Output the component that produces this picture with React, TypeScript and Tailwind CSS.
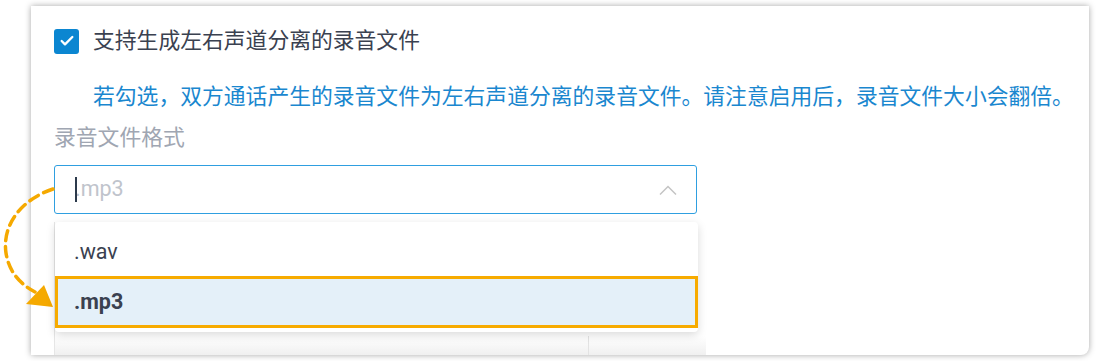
import { Check } from "lucide-react"

export default function App() {
  return (
    <div className="relative h-[361px] w-[1096px] overflow-hidden bg-white font-['Roboto','Noto_Sans_CJK_SC',sans-serif]">
      {/* Settings card */}
      <div className="relative ml-[31px] mt-[6px] h-[349px] w-[1058px] rounded-br-[8px] bg-white pl-[23px] pt-[23px] shadow-[0_0_6px_rgba(0,0,0,0.35)]">
        <div className="flex h-[24px] items-center gap-[14px]">
          <span className="flex h-[25px] w-[25px] items-center justify-center rounded-[3px] bg-[#0b86d1]">
            <Check className="h-[16px] w-[16px] text-white" strokeWidth={3.5} />
          </span>
          <span className="text-[21.8px] leading-[32px] text-[#3a4150]">支持生成左右声道分离的录音文件</span>
        </div>

        <p className="mt-[28px] pl-[39px] text-[21.8px] leading-[32px] text-[#1a87cf]">
          若勾选，双方通话产生的录音文件为左右声道分离的录音文件。请注意启用后，录音文件大小会翻倍。
        </p>

        <div className="mt-[9px] text-[21.8px] leading-[32px] text-[#a0a6b2]">录音文件格式</div>

        {/* Select */}
        <div className="relative mt-[11px] w-[643px]">
          <div className="relative flex h-[49px] items-center justify-between rounded-[3px] border border-[#2f9fe0] bg-white pl-[20px] pr-[19px]">
            <span className="text-[21.5px] text-[#c0c4cc]">.mp3</span>
            <span className="absolute left-[20px] top-[11px] h-[25px] w-[2px] bg-[#2c3a4c]" />
            <svg width="18" height="10" viewBox="0 0 18 10" fill="none" stroke="#c4c4c4" strokeWidth="1.5">
              <polyline points="1,9.5 9,1.5 17,9.5" />
            </svg>
          </div>

          {/* Table behind the menu */}
          <div className="mt-[8px] flex h-[133px] w-[652px] flex-col border-l border-[#e6e6e6]">
            <div className="flex-1" />
            <div className="relative flex h-[33px] items-start bg-white">
              <span className="ml-[20px] mt-[2px] h-[25px] w-[25px] rounded-[3px] border border-[#cfcfcf] bg-white" />
              <span className="ml-[460px] text-[16px] leading-[22px] text-[#3a4150]">2.15 s</span>
            </div>
            <div className="flex h-[19px] bg-gradient-to-b from-white to-[#f0f0f0]">
              <div className="w-[533px]" />
              <div className="border-l border-[#e3e3e3]" />
            </div>
          </div>

          {/* Dropdown menu */}
          <div className="absolute left-[1px] top-[57px] z-10 flex w-[643px] flex-col rounded-[4px] bg-white pb-[4px] pt-[7px] shadow-[0_3px_10px_rgba(0,0,0,0.15)]">
            <div className="flex h-[47px] items-center pl-[19px] text-[21.5px] text-[#3a4150]">.wav</div>
            <div className="flex h-[52px] items-center border-[3px] border-[#f7ab00] bg-[#e4f0f9] pl-[16px] text-[21.5px] font-bold text-[#3a4150]">
              .mp3
            </div>
          </div>
        </div>
      </div>

      {/* Dashed callout arrow */}
      <svg className="pointer-events-none absolute left-0 top-0" width="1096" height="361" fill="none">
        <path
          d="M53 189 C 20 200, 2 226, 6 253 C 9 272, 20 284, 35 292"
          stroke="#f5a900"
          strokeWidth="3.5"
          strokeDasharray="10 6"
          strokeLinecap="round"
        />
        <polygon points="44,285 53,307 26,304" fill="#f5a900" />
      </svg>
    </div>
  )
}
